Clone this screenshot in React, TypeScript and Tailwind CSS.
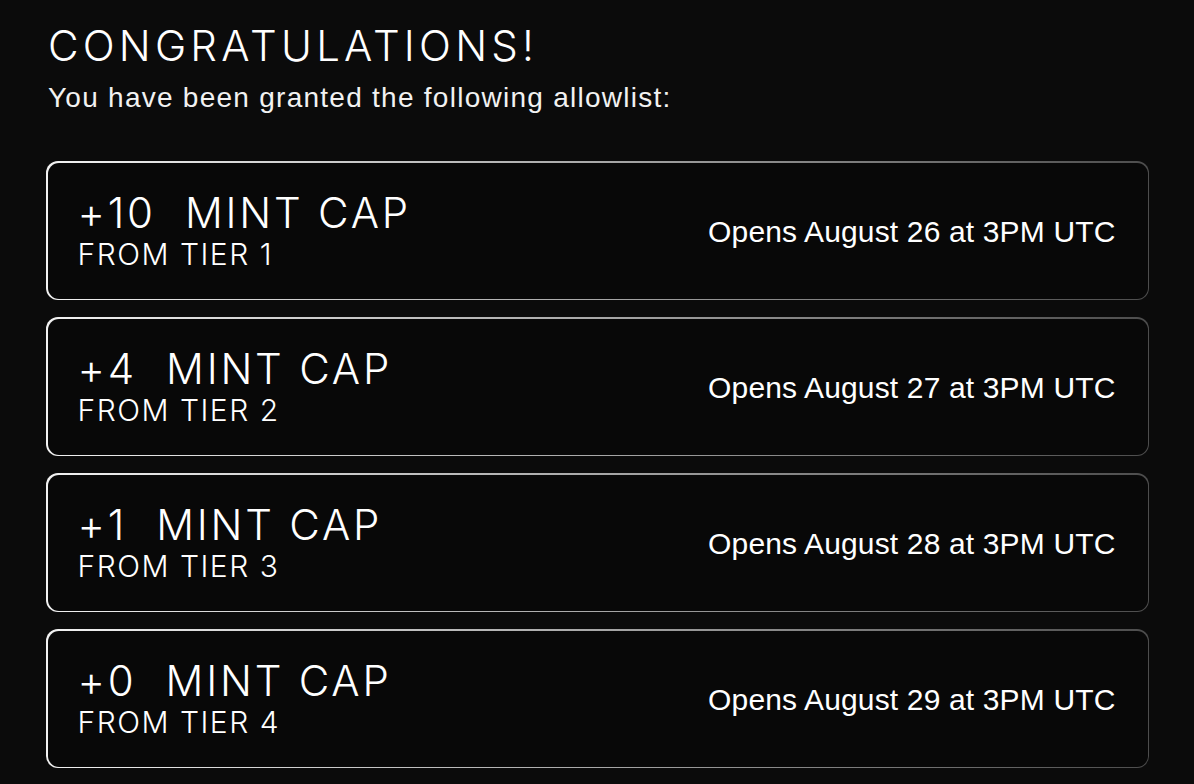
import React from "react";

type Allowlist = {
  cap: string;
  tier: number;
  opens: string;
};

const allowlists: Allowlist[] = [
  { cap: "+10", tier: 1, opens: "Opens August 26 at 3PM UTC" },
  { cap: "+4", tier: 2, opens: "Opens August 27 at 3PM UTC" },
  { cap: "+1", tier: 3, opens: "Opens August 28 at 3PM UTC" },
  { cap: "+0", tier: 4, opens: "Opens August 29 at 3PM UTC" },
];

const display = "font-['Inter','Liberation_Sans',sans-serif]";
const body = "font-['Liberation_Sans','Open_Sans',sans-serif]";

const AllowlistCard = ({ item }: { item: Allowlist }) => (
  <div className="rounded-[12px] bg-linear-to-r from-[#f2f2f2] via-[#a8a8a8] to-[#4d4d4d] p-[1.5px]">
    <div className="h-[136px] rounded-[11px] bg-[#080808] pl-[30px] pr-[32px] flex items-center justify-between">
      <div className={`${display} font-light text-white flex flex-col`}>
        <h2 className="text-[42px] leading-[44px] tracking-[0.066em] whitespace-pre">
          {item.cap}  MINT CAP
        </h2>
        <p className="text-[30px] leading-[34px] tracking-[0.05em] mt-[2px]">
          FROM TIER {item.tier}
        </p>
      </div>
      <p className={`${body} text-white text-[30px] leading-[36px] tracking-[0.005em] mt-[2px]`}>
        {item.opens}
      </p>
    </div>
  </div>
);

export default function App() {
  return (
    <div className="min-h-screen bg-[#0b0b0b] text-white px-[46px] pt-[20px] pb-[16px]">
      {/* Header */}
      <div className="pl-[2px]">
        <h1 className={`${display} font-light text-[42px] leading-[52px] tracking-[0.1em]`}>
          CONGRATULATIONS!
        </h1>
        <p className={`${body} text-[28px] leading-[34px] tracking-[0.045em] text-[#f2f2f2] mt-[9px]`}>
          You have been granted the following allowlist:
        </p>
      </div>

      {/* Allowlist cards */}
      <div className="mt-[46px] w-[1103px] flex flex-col gap-[17px]">
        {allowlists.map((item) => (
          <AllowlistCard key={item.tier} item={item} />
        ))}
      </div>
    </div>
  );
}
